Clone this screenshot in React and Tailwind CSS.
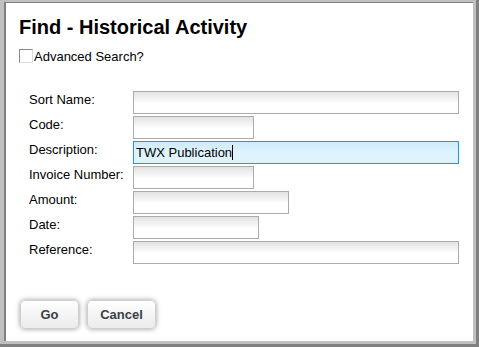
import React from 'react';

const fields = [
  { label: 'Sort Name:', width: 'w-[326px]' },
  { label: 'Code:', width: 'w-[121px]' },
  { label: 'Description:', width: 'w-[326px]', value: 'TWX Publication', focused: true },
  { label: 'Invoice Number:', width: 'w-[121px]' },
  { label: 'Amount:', width: 'w-[156px]' },
  { label: 'Date:', width: 'w-[126px]' },
  { label: 'Reference:', width: 'w-[326px]' },
];

const Field = ({ label, width, value, focused }) => (
  <div className="flex items-start h-[25px]">
    <label className="w-[104px] text-[13px] leading-[15px] text-black mt-[1px]">{label}</label>
    {focused ? (
      <div className={`${width} h-[23px] border border-[#1b9ad4] bg-[linear-gradient(to_bottom,#cfeafa,#def3fd_50%)] flex items-center pl-[2px] text-[13px] text-black`}>
        <span>{value}</span>
        <span className="w-px h-[15px] bg-black" />
      </div>
    ) : (
      <input
        type="text"
        readOnly
        className={`${width} h-[23px] border border-[#ababab] bg-[linear-gradient(to_bottom,#e2e2e2,#ffffff_55%)] outline-none`}
      />
    )}
  </div>
);

const App = () => {
  return (
    <div className="w-[479px] h-[347px] border-r-[3px] border-b-[3px] border-[#808080] font-['Liberation_Sans',Arial,sans-serif]">
      <div className="h-full bg-[#c0c0c0] pt-[2px] pl-[4px] pr-[3px] pb-[3px]">
        <div className="h-full bg-white border-t border-l-2 border-[#808080] flex flex-col">
          <h1 className="pl-[13px] pt-[13px] text-[20px] leading-[23px] font-bold text-black">
            Find - Historical Activity
          </h1>
          <label className="flex items-end pl-[13px] mt-[10px] h-[15px]">
            <span className="w-[14px] h-[14px] border border-t-[#8a8a8a] border-l-[#8a8a8a] border-r-[#dcdcdc] border-b-[#dcdcdc] bg-white mb-[1px]" />
            <span className="text-[13px] leading-[15px] text-black ml-px">Advanced Search?</span>
          </label>
          <div className="pl-[23px] mt-[27px] flex flex-col">
            {fields.map((f) => (
              <Field key={f.label} {...f} />
            ))}
          </div>
          <div className="flex-1" />
          <div className="flex gap-[8px] pl-[14px] pb-[12px]">
            <button className="w-[59px] h-[29px] rounded-[5px] border border-[#cfcfcf] bg-[linear-gradient(to_bottom,#ffffff,#ebebeb)] shadow-[0_0_5px_rgba(0,0,0,0.4)] text-[13px] font-bold text-[#3a3f47]">
              Go
            </button>
            <button className="w-[69px] h-[29px] rounded-[5px] border border-[#cfcfcf] bg-[linear-gradient(to_bottom,#ffffff,#ebebeb)] shadow-[0_0_5px_rgba(0,0,0,0.4)] text-[13px] font-bold text-[#3a3f47]">
              Cancel
            </button>
          </div>
        </div>
      </div>
    </div>
  );
};

export default App;
